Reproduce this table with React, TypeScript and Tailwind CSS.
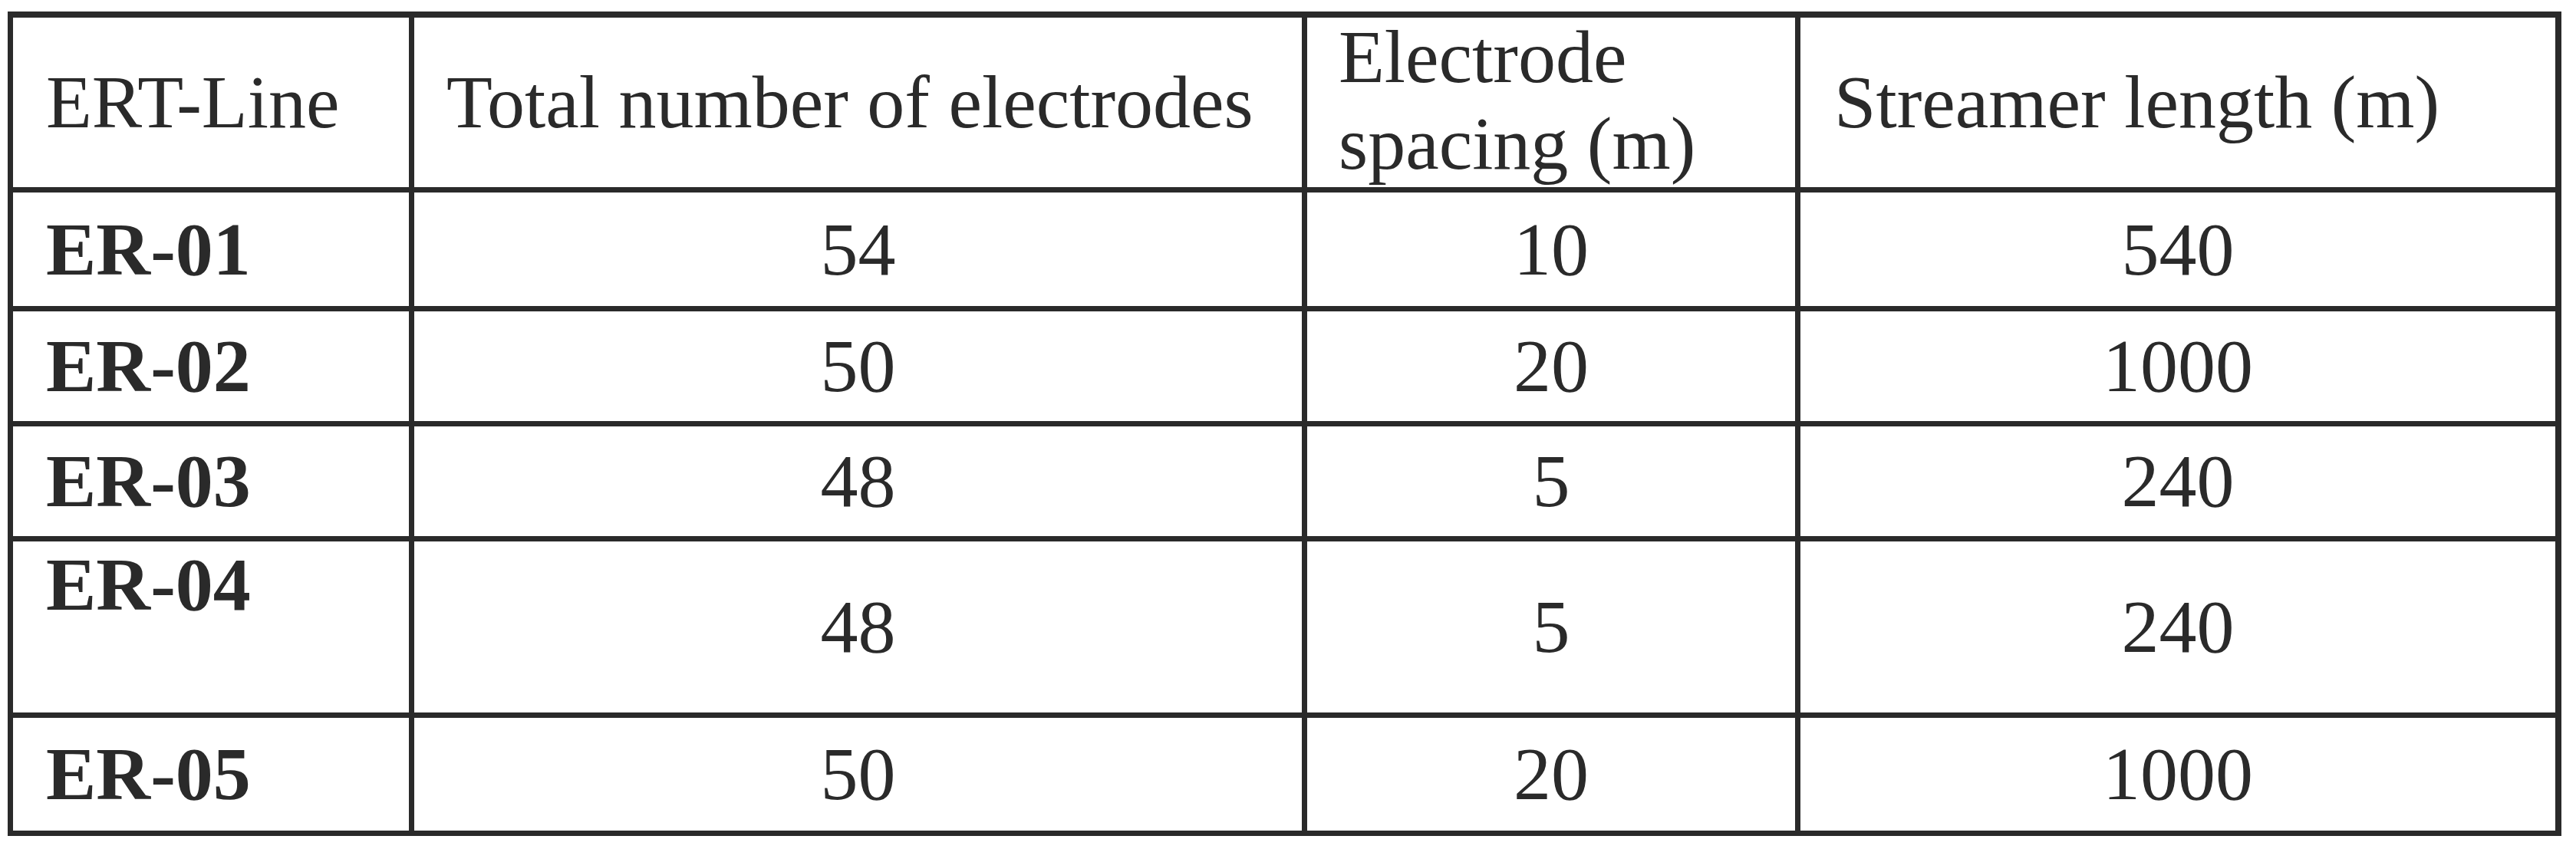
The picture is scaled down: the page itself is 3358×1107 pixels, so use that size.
import React from 'react';

interface Row {
  line: string;
  electrodes: string;
  spacing: string;
  length: string;
  // ER-04 keeps its label at the top of a taller row
  topLabel?: boolean;
}

const rows: Row[] = [
  { line: 'ER-01', electrodes: '54', spacing: '10', length: '540' },
  { line: 'ER-02', electrodes: '50', spacing: '20', length: '1000' },
  { line: 'ER-03', electrodes: '48', spacing: '5', length: '240' },
  { line: 'ER-04', electrodes: '48', spacing: '5', length: '240', topLabel: true },
  { line: 'ER-05', electrodes: '50', spacing: '20', length: '1000' },
];

const cell = 'bg-white flex items-center';

export default function App() {
  return (
    <div className="min-h-screen bg-white pt-[15px] pl-[10px] font-['Liberation_Serif','Times_New_Roman',serif] text-[98px] leading-[1.15] text-[#2a2a2a]">
      <div className="inline-grid grid-cols-[516px_1157px_636px_984px] grid-rows-[221px_148px_143px_143px_223px_147px] gap-[7px] bg-[#2a2a2a] pt-[8px] pb-[7px] pl-[7px] pr-[8px]">
        {/* Header */}
        <div className={`${cell} pl-[43px]`}>ERT-Line</div>
        <div className={`${cell} pl-[42px]`}>Total number of electrodes</div>
        <div className="bg-white pl-[41px]">
          <div className="-mt-[5px]">
            Electrode
            <br />
            spacing (m)
          </div>
        </div>
        <div className={`${cell} pl-[44px]`}>Streamer length (m)</div>

        {/* Body */}
        {rows.map((row) => (
          <React.Fragment key={row.line}>
            <div className={`bg-white flex pl-[43px] font-bold ${row.topLabel ? 'items-start' : 'items-center'}`}>
              {row.line}
            </div>
            <div className={`${cell} justify-center`}>{row.electrodes}</div>
            <div className={`${cell} justify-center`}>{row.spacing}</div>
            <div className={`${cell} justify-center`}>{row.length}</div>
          </React.Fragment>
        ))}
      </div>
    </div>
  );
}
